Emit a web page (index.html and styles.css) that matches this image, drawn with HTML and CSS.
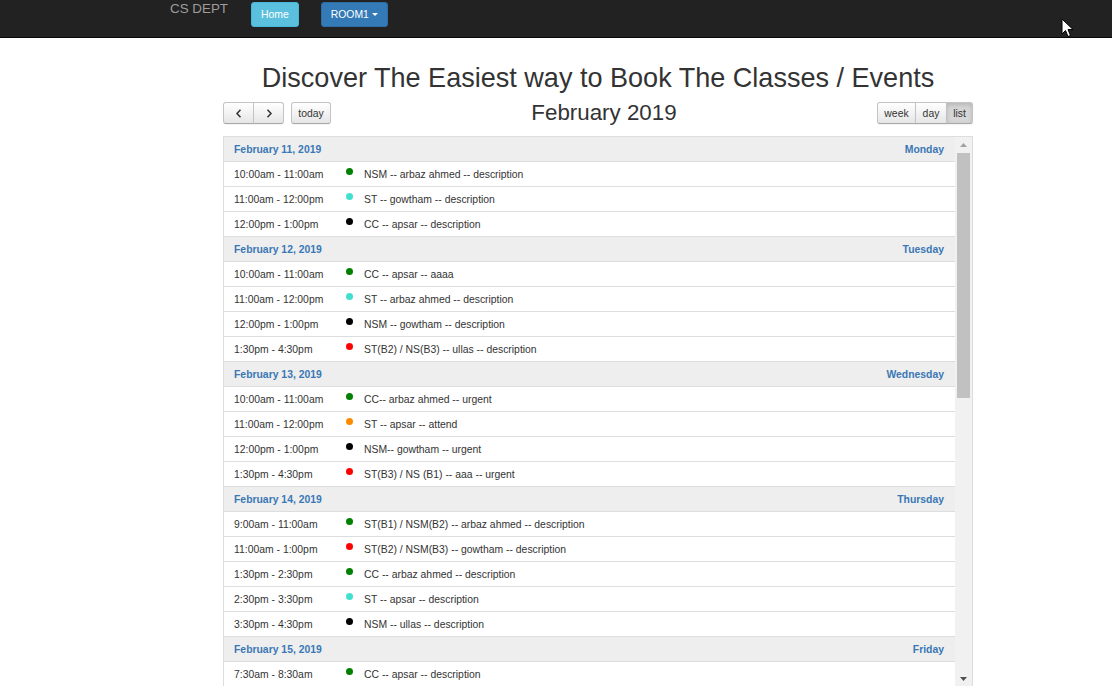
FILE: index.html
```html
<!DOCTYPE html>
<html>
<head>
<meta charset="utf-8">
<title>CS DEPT</title>
<link rel="stylesheet" href="styles.css">
</head>
<body>
<nav class="navbar">
  <span class="brand">CS DEPT</span>
  <a class="nbtn nbtn-info">Home</a>
  <a class="nbtn nbtn-primary">ROOM1 <span class="caret"></span></a>
  <svg class="cursor" width="14" height="20" viewBox="0 0 14 20"><path d="M1 1 L1 16 L4.5 12.5 L7 18.5 L9.5 17.5 L7 11.5 L12 11.5 Z" fill="#fff" stroke="#000" stroke-width="1"/></svg>
</nav>
<main class="main">
  <h1 class="headline">Discover The Easiest way to Book The Classes / Events</h1>
  <div class="cal">
    <div class="toolbar">
      <div class="tb-left">
        <div class="btn-group">
          <button class="fbtn fbtn-icon"><svg width="8" height="9" viewBox="0 0 8 9"><path d="M5.5 0.8 L2 4.5 L5.5 8.2" fill="none" stroke="#333" stroke-width="1.5"/></svg></button>
          <button class="fbtn fbtn-icon"><svg width="8" height="9" viewBox="0 0 8 9"><path d="M2.5 0.8 L6 4.5 L2.5 8.2" fill="none" stroke="#333" stroke-width="1.5"/></svg></button>
        </div>
        <button class="fbtn fbtn-solo">today</button>
      </div>
      <h2 class="title">February 2019</h2>
      <div class="btn-group">
        <button class="fbtn fbtn-week">week</button>
        <button class="fbtn fbtn-day">day</button>
        <button class="fbtn fbtn-list active">list</button>
      </div>
    </div>
    <div class="listbox">
      <div class="list">
        <div class="dayhead"><span>February 11, 2019</span><span>Monday</span></div>
        <div class="ev"><span class="time">10:00am - 11:00am</span><span class="dot green"></span><span class="etitle">NSM -- arbaz ahmed -- description</span></div>
        <div class="ev"><span class="time">11:00am - 12:00pm</span><span class="dot turq"></span><span class="etitle">ST -- gowtham -- description</span></div>
        <div class="ev"><span class="time">12:00pm - 1:00pm</span><span class="dot black"></span><span class="etitle">CC -- apsar -- description</span></div>
        <div class="dayhead"><span>February 12, 2019</span><span>Tuesday</span></div>
        <div class="ev"><span class="time">10:00am - 11:00am</span><span class="dot green"></span><span class="etitle">CC -- apsar -- aaaa</span></div>
        <div class="ev"><span class="time">11:00am - 12:00pm</span><span class="dot turq"></span><span class="etitle">ST -- arbaz ahmed -- description</span></div>
        <div class="ev"><span class="time">12:00pm - 1:00pm</span><span class="dot black"></span><span class="etitle">NSM -- gowtham -- description</span></div>
        <div class="ev"><span class="time">1:30pm - 4:30pm</span><span class="dot red"></span><span class="etitle">ST(B2) / NS(B3) -- ullas -- description</span></div>
        <div class="dayhead"><span>February 13, 2019</span><span>Wednesday</span></div>
        <div class="ev"><span class="time">10:00am - 11:00am</span><span class="dot green"></span><span class="etitle">CC-- arbaz ahmed -- urgent</span></div>
        <div class="ev"><span class="time">11:00am - 12:00pm</span><span class="dot orange"></span><span class="etitle">ST -- apsar -- attend</span></div>
        <div class="ev"><span class="time">12:00pm - 1:00pm</span><span class="dot black"></span><span class="etitle">NSM-- gowtham -- urgent</span></div>
        <div class="ev"><span class="time">1:30pm - 4:30pm</span><span class="dot red"></span><span class="etitle">ST(B3) / NS (B1) -- aaa -- urgent</span></div>
        <div class="dayhead"><span>February 14, 2019</span><span>Thursday</span></div>
        <div class="ev"><span class="time">9:00am - 11:00am</span><span class="dot green"></span><span class="etitle">ST(B1) / NSM(B2) -- arbaz ahmed -- description</span></div>
        <div class="ev"><span class="time">11:00am - 1:00pm</span><span class="dot red"></span><span class="etitle">ST(B2) / NSM(B3) -- gowtham -- description</span></div>
        <div class="ev"><span class="time">1:30pm - 2:30pm</span><span class="dot green"></span><span class="etitle">CC -- arbaz ahmed -- description</span></div>
        <div class="ev"><span class="time">2:30pm - 3:30pm</span><span class="dot turq"></span><span class="etitle">ST -- apsar -- description</span></div>
        <div class="ev"><span class="time">3:30pm - 4:30pm</span><span class="dot black"></span><span class="etitle">NSM -- ullas -- description</span></div>
        <div class="dayhead"><span>February 15, 2019</span><span>Friday</span></div>
        <div class="ev"><span class="time">7:30am - 8:30am</span><span class="dot green"></span><span class="etitle">CC -- apsar -- description</span></div>
      </div>
      <div class="scrollbar">
        <div class="sb-arrow"><svg width="7" height="4" viewBox="0 0 7 4"><path d="M0 4 L3.5 0 L7 4 Z" fill="#a3a3a3"/></svg></div>
        <div class="sb-thumb"></div>
        <div class="sb-track"></div>
        <div class="sb-arrow"><svg width="7" height="4" viewBox="0 0 7 4"><path d="M0 0 L3.5 4 L7 0 Z" fill="#505050"/></svg></div>
      </div>
    </div>
  </div>
</main>
</body>
</html>
```
FILE: styles.css
```css
html { overflow: hidden; }
body {
  margin: 0;
  font-family: "Liberation Sans", Arial, sans-serif;
  color: #333;
  background: #fff;
  font-size: 10.4px;
}
.navbar {
  position: relative;
  height: 37px;
  background: #222;
  border-bottom: 1px solid #080808;
  display: flex;
  align-items: flex-start;
  padding-left: 170px;
}
.brand {
  color: #9d9d9d;
  font-size: 13.4px;
  line-height: 15px;
  margin-top: 1px;
  margin-right: 23px;
}
.nbtn {
  margin-top: 2px;
  height: 23px;
  line-height: 23px;
  padding: 0 9px;
  border-radius: 3px;
  color: #fff;
  font-size: 10.4px;
  border: 1px solid transparent;
  display: flex;
  align-items: center;
  gap: 3px;
}
.nbtn-info { background: #5bc0de; border-color: #46b8da; margin-right: 22px; }
.nbtn-primary { background: #337ab7; border-color: #2e6da4; padding: 0 9px 0 9px; }
.caret {
  width: 0; height: 0;
  border-left: 3px solid transparent;
  border-right: 3px solid transparent;
  border-top: 3px solid #fff;
}
.cursor { position: absolute; left: 1061px; top: 18px; }

.main { margin-left: 223px; width: 750px; }
.headline {
  margin: 25px 0 0 0;
  font-size: 27.05px;
  line-height: 30px;
  font-weight: 400;
  text-align: center;
  color: #333;
}
.toolbar {
  display: flex;
  align-items: center;
  height: 22px;
  margin-top: 9px;
}
.tb-left { display: flex; gap: 7px; }
.btn-group { display: flex; }
.title {
  flex: 1;
  margin: 0;
  text-align: center;
  font-size: 22.35px;
  font-weight: 400;
  line-height: 26px;
  color: #333;
}
.fbtn {
  height: 22px;
  padding: 0 5px;
  font-family: "Liberation Sans", Arial, sans-serif;
  font-size: 10.4px;
  color: #333;
  background: linear-gradient(#ffffff, #e6e6e6);
  border: 1px solid #c4c4c4;
  border-bottom-color: #a8a8a8;
  box-shadow: inset 0 1px 0 rgba(255,255,255,.2), 0 1px 1px rgba(0,0,0,.05);
  display: flex;
  align-items: center;
  justify-content: center;
  margin: 0;
}
.fbtn-icon { width: 31px; }
.btn-group .fbtn:first-child { border-radius: 3px 0 0 3px; }
.btn-group .fbtn:last-child { border-radius: 0 3px 3px 0; margin-left: -1px; }
.fbtn-solo { border-radius: 3px; width: 40px; }
.fbtn-week { width: 39px; }
.fbtn-day { width: 32px; margin-left: -1px; }
.fbtn-list { width: 27px; }
.fbtn.active {
  background: #d6d6d6;
  box-shadow: inset 0 2px 4px rgba(0,0,0,.15), 0 1px 2px rgba(0,0,0,.05);
}

.listbox {
  margin-top: 12px;
  height: 550px;
  border: 1px solid #ddd;
  border-bottom: none;
  display: flex;
  overflow: hidden;
}
.list { flex: 1; }
.dayhead {
  height: 24px;
  border-bottom: 1px solid #ddd;
  background: #eee;
  display: flex;
  align-items: center;
  justify-content: space-between;
  padding: 0 11px 0 10px;
  font-weight: 700;
  color: #3a78b5;
}
.ev {
  height: 24px;
  border-bottom: 1px solid #ddd;
  display: flex;
  align-items: center;
  padding-left: 10px;
}
.time { width: 112px; }
.dot {
  width: 7px; height: 7px;
  border-radius: 50%;
  align-self: flex-start;
  margin-top: 6px;
  margin-right: 11px;
}
.green { background: #008000; }
.turq { background: #40e0d0; }
.black { background: #000; }
.red { background: #ff0000; }
.orange { background: #ff8c00; }
.scrollbar {
  width: 17px;
  background: #f1f1f1;
  display: flex;
  flex-direction: column;
  align-items: center;
}
.sb-arrow { height: 16px; width: 17px; display: flex; align-items: center; justify-content: center; }
.sb-thumb { width: 13px; height: 245px; background: #c1c1c1; }
.sb-track { flex: 1; }
```
